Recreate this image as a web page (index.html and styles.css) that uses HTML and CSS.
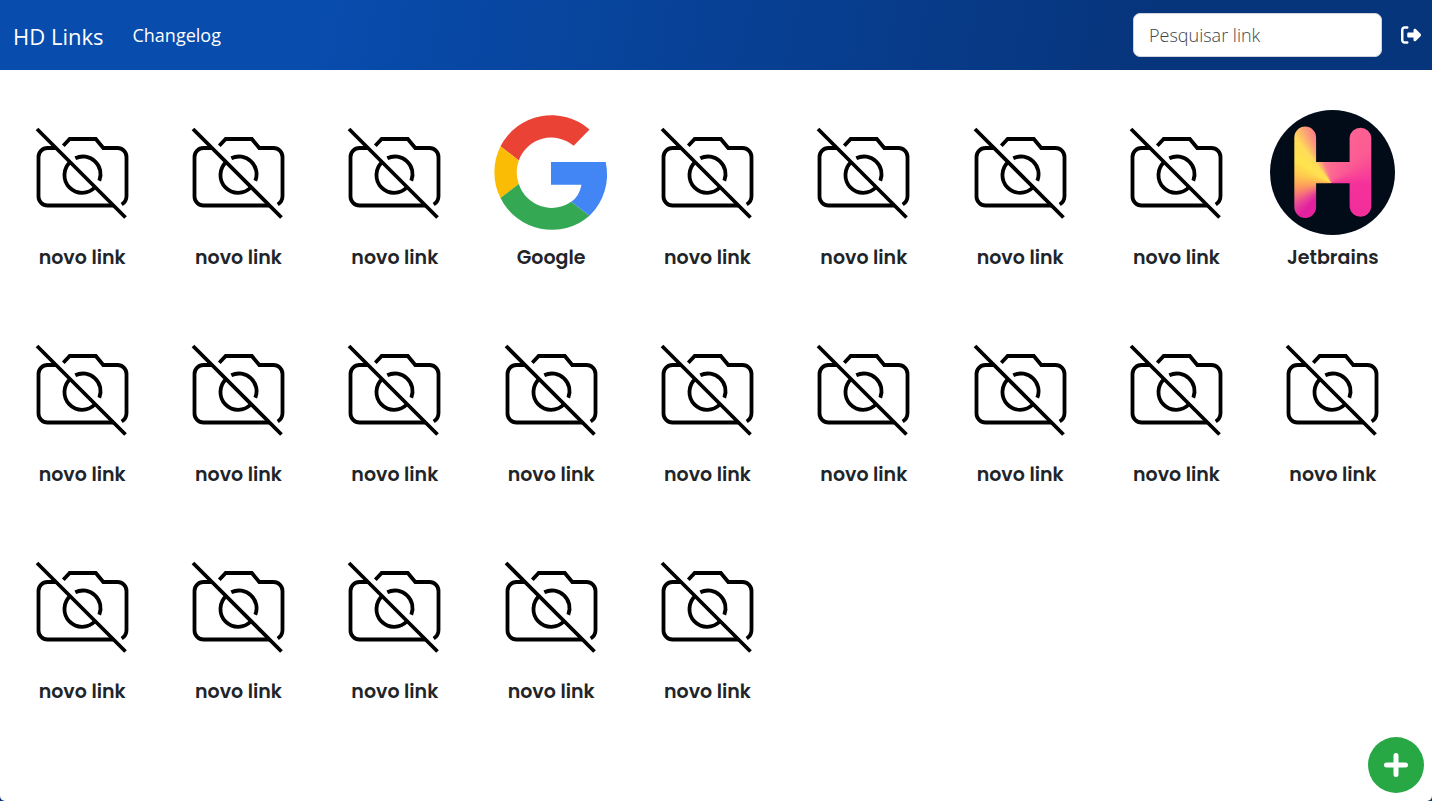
FILE: index.html
```html
<!DOCTYPE html>
<html lang="pt-BR">
<head>
<meta charset="utf-8">
<meta name="viewport" content="width=device-width, initial-scale=1">
<title>HD Links</title>
<link rel="stylesheet" href="styles.css">
</head>
<body>
<svg class="sprite" aria-hidden="true">
  <symbol id="no-photo" viewBox="0 0 125 125">
    <g fill="none" stroke="#000" stroke-width="3.8">
      <path d="M17 19 105.500 107.500"/>
      <path d="M36 38H27.500A9 9 0 0 0 18.500 47V86.500A9 9 0 0 0 27.500 95.500H93.500"/>
      <path d="M43.300 35.700 49.700 29H75.800L83.300 38H97.500A9 9 0 0 1 106.500 47V86Q106.500 91.500 101.700 94.500"/>
      <path d="M55.300 48.200A17.700 17.700 0 0 1 79.300 70.800"/>
      <path d="M50.500 51.800A17.700 17.700 0 1 0 75 77.300"/>
    </g>
  </symbol>
  <symbol id="google" viewBox="0 0 125 125">
    <path fill="#ea4335" d="M11.500 36.300A57.500 57.500 0 0 1 100.500 19.500L84.700 35.800A34.500 34.500 0 0 0 29.800 50.500Z"/>
    <path fill="#fbbc05" d="M11.500 36.300A57.500 57.500 0 0 0 11.500 88L29.800 74A34.500 34.500 0 0 1 29.800 50.500Z"/>
    <path fill="#34a853" d="M11.500 88A57.500 57.500 0 0 0 100.500 105.800L82.200 91.800A34.500 34.500 0 0 1 29.800 74Z"/>
    <path fill="#4285f4" d="M62 52H116.700A57.500 57.500 0 0 1 100.500 105.800L82.200 91.800Q90.500 86 92.500 74.700H62Z"/>
  </symbol>
</svg>
<header class="navbar">
  <a class="brand" href="#">HD Links</a>
  <nav class="menu"><a class="menu-link" href="#">Changelog</a></nav>
  <form class="search">
    <input class="search-input" type="search" placeholder="Pesquisar link" aria-label="Pesquisar link">
  </form>
  <button class="logout" type="button" aria-label="Sair">
    <svg class="logout-icon" viewBox="0 0 512 512" fill="currentColor"><path d="M378 105 505 233c9 9 9 37 0 46L378 407c-24 22-58 5-58-25v-62H192c-18 0-32-14-32-32v-64c0-18 14-32 32-32h128v-62c0-30 34-47 58-25ZM160 96H96c-18 0-32 14-32 32v256c0 18 14 32 32 32h64c18 0 32 14 32 32s-14 32-32 32H96c-53 0-96-43-96-96V128C0 75 43 32 96 32h64c18 0 32 14 32 32s-14 32-32 32Z"/></svg>
  </button>
</header>
<main class="page">
  <div class="links">
    <a class="link" href="#"><svg class="thumb"><use href="#no-photo"/></svg><span>novo link</span></a>
    <a class="link" href="#"><svg class="thumb"><use href="#no-photo"/></svg><span>novo link</span></a>
    <a class="link" href="#"><svg class="thumb"><use href="#no-photo"/></svg><span>novo link</span></a>
    <a class="link" href="#"><svg class="thumb"><use href="#google"/></svg><span>Google</span></a>
    <a class="link" href="#"><svg class="thumb"><use href="#no-photo"/></svg><span>novo link</span></a>
    <a class="link" href="#"><svg class="thumb"><use href="#no-photo"/></svg><span>novo link</span></a>
    <a class="link" href="#"><svg class="thumb"><use href="#no-photo"/></svg><span>novo link</span></a>
    <a class="link" href="#"><svg class="thumb"><use href="#no-photo"/></svg><span>novo link</span></a>
    <a class="link" href="#"><i class="thumb hyper"><i class="hyper-mark"></i></i><span>Jetbrains</span></a>
    <a class="link" href="#"><svg class="thumb"><use href="#no-photo"/></svg><span>novo link</span></a>
    <a class="link" href="#"><svg class="thumb"><use href="#no-photo"/></svg><span>novo link</span></a>
    <a class="link" href="#"><svg class="thumb"><use href="#no-photo"/></svg><span>novo link</span></a>
    <a class="link" href="#"><svg class="thumb"><use href="#no-photo"/></svg><span>novo link</span></a>
    <a class="link" href="#"><svg class="thumb"><use href="#no-photo"/></svg><span>novo link</span></a>
    <a class="link" href="#"><svg class="thumb"><use href="#no-photo"/></svg><span>novo link</span></a>
    <a class="link" href="#"><svg class="thumb"><use href="#no-photo"/></svg><span>novo link</span></a>
    <a class="link" href="#"><svg class="thumb"><use href="#no-photo"/></svg><span>novo link</span></a>
    <a class="link" href="#"><svg class="thumb"><use href="#no-photo"/></svg><span>novo link</span></a>
    <a class="link" href="#"><svg class="thumb"><use href="#no-photo"/></svg><span>novo link</span></a>
    <a class="link" href="#"><svg class="thumb"><use href="#no-photo"/></svg><span>novo link</span></a>
    <a class="link" href="#"><svg class="thumb"><use href="#no-photo"/></svg><span>novo link</span></a>
    <a class="link" href="#"><svg class="thumb"><use href="#no-photo"/></svg><span>novo link</span></a>
    <a class="link" href="#"><svg class="thumb"><use href="#no-photo"/></svg><span>novo link</span></a>
  </div>
</main>
<button class="add" type="button" aria-label="Adicionar link">
  <svg class="add-icon" viewBox="0 0 24 24" fill="none" stroke="currentColor" stroke-width="5" stroke-linecap="round"><path d="M12 2.500V21.500M2.500 12H21.500"/></svg>
</button>
</body>
</html>
```
FILE: styles.css
```css
* {
  box-sizing: border-box;
}

body {
  display: flex;
  flex-direction: column;
  min-height: 100vh;
  margin: 0;
  background: #07357c;
  font-family: "Segoe UI", "Open Sans", sans-serif;
}

.sprite {
  position: absolute;
  width: 0;
  height: 0;
}

.navbar {
  display: flex;
  align-items: center;
  height: 70px;
  padding: 0 11px 0 13px;
  background: linear-gradient(100deg, #084cad 22%, #07357c 80%);
  color: #fff;
}

.brand,
.menu-link {
  color: inherit;
  text-decoration: none;
}

.brand {
  margin-right: 29px;
  padding-top: 2px;
  font-size: 22px;
}

.menu {
  flex: 1;
  font-size: 18px;
}

.search-input {
  display: block;
  width: 249px;
  height: 44px;
  padding: 0 15px;
  border: 1px solid #ced4da;
  border-radius: 7px;
  background: #fff;
  font-family: inherit;
  font-size: 18px;
}

.search-input::placeholder {
  color: #40464c;
  font-weight: 300;
}

.logout {
  display: flex;
  margin-left: 19px;
  padding: 0;
  border: 0;
  background: none;
  color: #fff;
}

.logout-icon {
  width: 20px;
  height: 20px;
}

.page {
  flex: 1;
  padding: 40px 21px 20px 4px;
  border-radius: 0 0 5px 5px;
  background: #fff;
}

.links {
  display: grid;
  grid-template-columns: repeat(auto-fill, minmax(150px, 1fr));
  row-gap: 54px;
}

.link {
  display: flex;
  flex-direction: column;
  align-items: center;
  gap: 8px;
  color: #212529;
  font-family: Poppins, Inter, sans-serif;
  font-size: 19px;
  font-weight: 600;
  line-height: 30px;
  text-decoration: none;
}

.thumb {
  display: block;
  width: 125px;
  height: 125px;
}

.hyper {
  border-radius: 50%;
  background: #020c19;
}

.hyper-mark {
  display: block;
  height: 100%;
  background: conic-gradient(from 0deg at 61px 73px, #fb6a92 0deg, #fc5a93 50deg, #f5329a 90deg, #f02a9d 180deg, #e2209f 224deg, #e8409a 236deg, #f98070 254deg, #fda25a 266deg, #ffc94e 284deg, #ffe44e 304deg, #ffdc58 322deg, #fca078 334deg, #fb7a8a 343deg, #fb6a92 360deg);
  clip-path: path("M24 27.500A10.900 10.900 0 0 1 45.800 27.500V52H79.300V27.500A10.900 10.900 0 0 1 101 27.500V97A10.900 10.900 0 0 1 79.300 97V73.300H45.800V97A10.900 10.900 0 0 1 24 97Z");
}

.add {
  position: fixed;
  right: 8px;
  bottom: 8px;
  display: flex;
  align-items: center;
  justify-content: center;
  width: 56px;
  height: 56px;
  padding: 0;
  border: 0;
  border-radius: 50%;
  background: #28a745;
  color: #fff;
}

.add-icon {
  width: 24px;
  height: 24px;
}
```
